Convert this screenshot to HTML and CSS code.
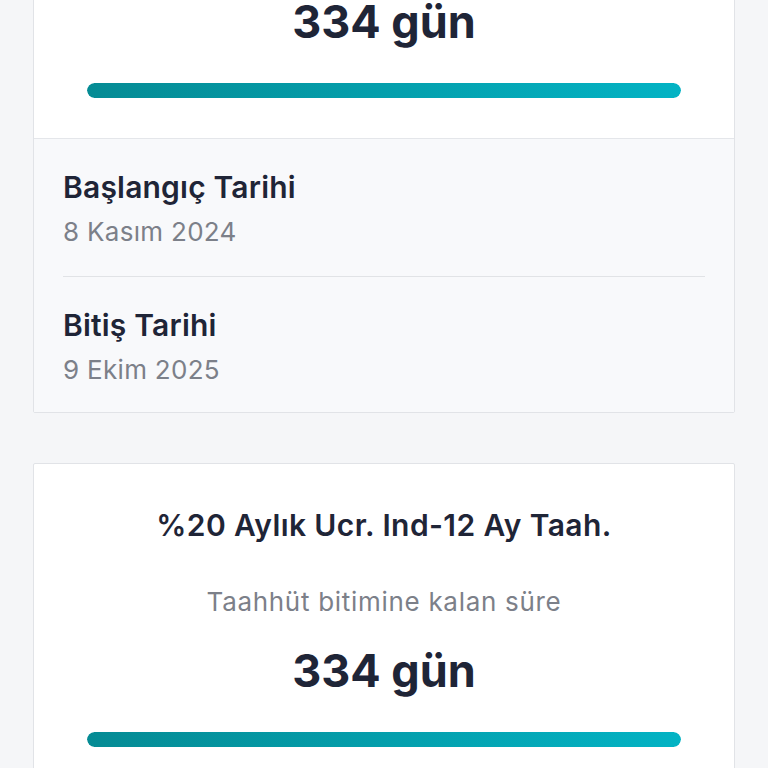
FILE: index.html
```html
<!DOCTYPE html>
<html lang="tr">
<head>
    <meta charset="UTF-8">
    <meta name="viewport" content="width=device-width, initial-scale=1.0">
    <title>Taahhütlerim</title>
    <link rel="stylesheet" href="styles.css">
</head>
<body>
    <div class="page">
        <div class="card first">
            <div class="card-top">
                <h3 class="plan-name">%20 Aylık Ucr. Ind-12 Ay Taah.</h3>
                <p class="remaining-label">Taahhüt bitimine kalan süre</p>
                <p class="remaining-days">334 gün</p>
                <div class="progress"><div class="progress-fill" style="width: 100%"></div></div>
            </div>
            <div class="card-dates">
                <div class="date-row">
                    <div class="date-title">Başlangıç Tarihi</div>
                    <div class="date-value">8 Kasım 2024</div>
                </div>
                <div class="date-row">
                    <div class="date-title">Bitiş Tarihi</div>
                    <div class="date-value">9 Ekim 2025</div>
                </div>
            </div>
        </div>

        <div class="card">
            <div class="card-top">
                <h3 class="plan-name">%20 Aylık Ucr. Ind-12 Ay Taah.</h3>
                <p class="remaining-label">Taahhüt bitimine kalan süre</p>
                <p class="remaining-days">334 gün</p>
                <div class="progress"><div class="progress-fill" style="width: 100%"></div></div>
            </div>
            <div class="card-dates">
                <div class="date-row">
                    <div class="date-title">Başlangıç Tarihi</div>
                    <div class="date-value">8 Kasım 2024</div>
                </div>
                <div class="date-row">
                    <div class="date-title">Bitiş Tarihi</div>
                    <div class="date-value">9 Ekim 2025</div>
                </div>
            </div>
        </div>
    </div>
</body>
</html>
```

FILE: styles.css
```css
body {
    margin: 0;
    padding: 0;
    background-color: #f5f6f8;
    font-family: Inter, Lato, sans-serif;
    color: #1f2537;
    overflow: hidden;
}

.page {
    padding: 0 33px;
    display: flex;
    flex-direction: column;
    gap: 50px;
}

/* the page is scrolled: the first card starts above the window */
.card.first {
    margin-top: -186px;
}

.card {
    background-color: white;
    border: 1px solid #e1e3e7;
    border-radius: 2px;
}

.card-top {
    padding: 44px 53px 40px;
    text-align: center;
}

.plan-name {
    margin: 0;
    font-size: 30px;
    font-weight: 600;
    line-height: 34px;
    letter-spacing: 0.4px;
}

.remaining-label {
    margin: 44px 0 0;
    font-size: 26px;
    line-height: 32px;
    letter-spacing: 0.7px;
    color: #7c8089;
}

.remaining-days {
    margin: 25px 0 0;
    font-size: 45px;
    font-weight: 700;
    line-height: 56px;
}

.progress {
    margin-top: 33px;
    height: 15px;
    border-radius: 8px;
    background-color: #e6f6f8;
    overflow: hidden;
}

.progress-fill {
    height: 100%;
    border-radius: 8px;
    background: linear-gradient(90deg, #058b94, #03b3c4);
}

.card-dates {
    background-color: #f8f9fb;
    border-top: 1px solid #e4e6ea;
    padding: 0 29px;
}

.date-row {
    padding: 31px 0 28px;
}

.date-row + .date-row {
    border-top: 1px solid #e1e3e6;
    padding-bottom: 26px;
}

.date-title {
    font-size: 30px;
    font-weight: 600;
    line-height: 34px;
    letter-spacing: 0.2px;
}

.date-value {
    margin-top: 12px;
    font-size: 26px;
    line-height: 32px;
    letter-spacing: 0.3px;
    color: #7c8089;
}
```
